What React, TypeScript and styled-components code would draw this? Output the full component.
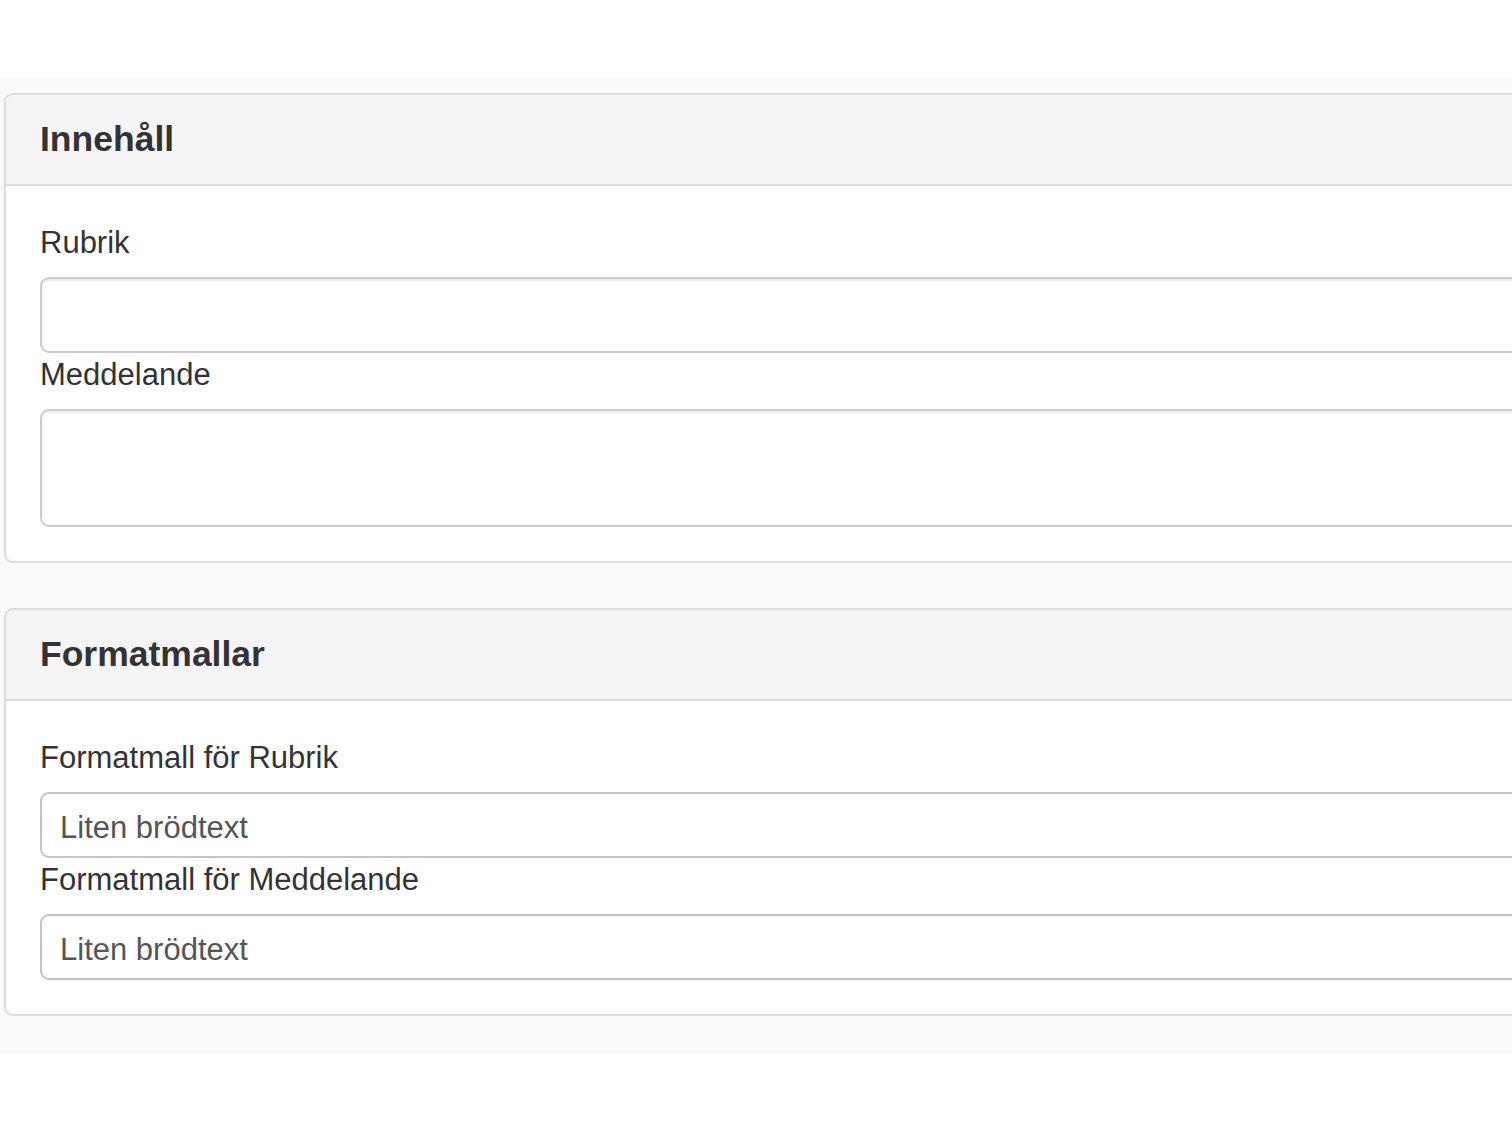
import React from "react";
import styled, { createGlobalStyle } from "styled-components";

const Global = createGlobalStyle`
  html, body {
    margin: 0;
    padding: 0;
    background: #ffffff;
    overflow: hidden;
  }
  body {
    font-family: "Liberation Sans", Arial, sans-serif;
    color: #333333;
  }
  * { box-sizing: border-box; }
`;

const Page = styled.div`
  padding-top: 77px;
  width: 1700px;
`;

const Area = styled.div`
  background: #f9f9f9;
  padding: 16px 0 38px 4px;
  display: flex;
  flex-direction: column;
  gap: 45px;
`;

const Panel = styled.section`
  background: #ffffff;
  border: 2px solid #dddddd;
  border-radius: 9px;
  overflow: hidden;
`;

const PanelHeader = styled.div`
  height: 91px;
  background: #f5f5f5;
  border-bottom: 2px solid #dddddd;
  display: flex;
  align-items: center;
  padding: 0 34px;
`;

const PanelTitle = styled.h3`
  margin: 0;
  font-size: 35.5px;
  font-weight: 700;
  line-height: 1.1;
  color: #333333;
`;

const PanelBody = styled.div`
  padding: 35px 34px 34px;
  display: flex;
  flex-direction: column;
`;

const Label = styled.label`
  display: block;
  font-size: 31px;
  line-height: 44px;
  color: #333333;
  margin-bottom: 12px;
`;

const TextInput = styled.input`
  display: block;
  width: 100%;
  height: 76px;
  border: 2px solid #cccccc;
  border-radius: 9px;
  background: #ffffff;
  box-shadow: inset 0 2px 2px rgba(0, 0, 0, 0.075);
  font-family: inherit;
  font-size: 31px;
  padding: 0 18px;
  color: #555555;
  outline: none;
`;

const TextArea = styled.textarea`
  display: block;
  width: 100%;
  height: 118px;
  border: 2px solid #cccccc;
  border-radius: 9px;
  background: #ffffff;
  box-shadow: inset 0 2px 2px rgba(0, 0, 0, 0.075);
  font-family: inherit;
  font-size: 31px;
  padding: 14px 18px;
  color: #555555;
  resize: none;
  outline: none;
`;

const Select = styled.select`
  display: block;
  width: 100%;
  height: 66px;
  border: 2px solid #c4c4c4;
  border-radius: 9px;
  background: #ffffff;
  font-family: inherit;
  font-size: 31px;
  padding: 5px 18px 0;
  color: #555555;
  appearance: none;
  -webkit-appearance: none;
  outline: none;
`;

export default function App() {
  return (
    <>
      <Global />
      <Page>
        <Area>
          <Panel>
            <PanelHeader>
              <PanelTitle>Innehåll</PanelTitle>
            </PanelHeader>
            <PanelBody>
              <Label htmlFor="rubrik">Rubrik</Label>
              <TextInput id="rubrik" type="text" />
              <Label htmlFor="meddelande">Meddelande</Label>
              <TextArea id="meddelande" />
            </PanelBody>
          </Panel>
          <Panel>
            <PanelHeader>
              <PanelTitle>Formatmallar</PanelTitle>
            </PanelHeader>
            <PanelBody>
              <Label htmlFor="fmr">Formatmall för Rubrik</Label>
              <Select id="fmr" defaultValue="liten">
                <option value="liten">Liten brödtext</option>
              </Select>
              <Label htmlFor="fmm">Formatmall för Meddelande</Label>
              <Select id="fmm" defaultValue="liten">
                <option value="liten">Liten brödtext</option>
              </Select>
            </PanelBody>
          </Panel>
        </Area>
      </Page>
    </>
  );
}
